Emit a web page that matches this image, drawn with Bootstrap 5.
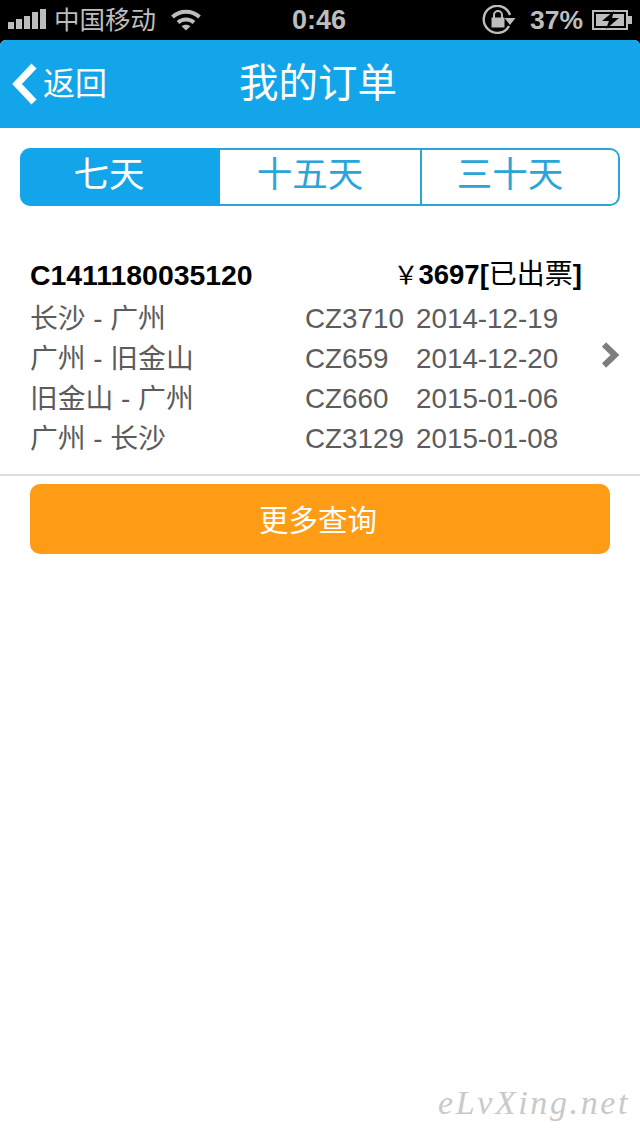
<!DOCTYPE html>
<html lang="zh-CN">
<head>
  <meta charset="UTF-8" />
  <title>我的订单</title>
  <link href="https://cdn.jsdelivr.net/npm/bootstrap@5.3.0/dist/css/bootstrap.min.css" rel="stylesheet" />
  <style>
    body {
      width: 640px;
      height: 1136px;
      overflow: hidden;
      font-family: "Liberation Sans", "Noto Sans CJK SC", sans-serif;
      background: #000;
    }
    .status-bar { height: 40px; color: #bdbdbd; font-size: 25.5px; line-height: 40px; }
    .status-left { width: 280px; padding-left: 8px; }
    .carrier { margin-left: 6px; }
    .wifi-icon { margin-left: 14px; }
    .status-time { width: 200px; padding-left: 12px; font-weight: 700; font-size: 27px; }
    .status-pct { margin-left: 14px; font-weight: 700; font-size: 26.5px; }
    .battery-icon { margin-left: 9px; }
    .screen { height: 1096px; background: #fff; border-radius: 6px 6px 0 0; overflow: hidden; }
    .top-bar { height: 88px; background: #12a5ea; color: #fff; display: grid; grid-template-columns: 1fr auto 1fr; padding: 0 4px 0 12px; }
    .top-title { font-size: 39.5px; line-height: 1; padding-right: 12px; }
    .back-text { font-size: 32px; margin-left: 6px; }
    .tab-group { margin: 20px 20px 0; height: 58px; }
    .tab-item {
      border: 2px solid #2aa5d8;
      border-left-width: 0;
      border-radius: 0;
      background: #fff;
      color: #2aa5d8;
      font-size: 35.5px;
      line-height: 1;
      padding: 0 20px 3px 0;
    }
    .tab-item:first-child { width: 200px; flex: none; background: #12a5ea; border-color: #12a5ea; color: #fff; border-radius: 10px 0 0 10px; }
    .tab-item:nth-child(2) { width: 202px; flex: none; }
    .tab-item:last-child { flex: 1; border-radius: 0 10px 10px 0; }
    .order-row { height: 270px; padding: 49px 20px 0 30px; border-bottom: 2px solid #dcdcdc; }
    .order-main { width: 552px; }
    .order-head { font-size: 28.4px; font-weight: 700; color: #000; line-height: 40px; height: 44px; }
    .order-status { font-size: 27.5px; }
    .yen { font-weight: 400; font-size: 25px; }
    .ticket-state { font-weight: 400; font-size: 28px; }
    .ticket-state b { font-size: 27.5px; }
    .flight-list { display: grid; grid-template-columns: 275px 111px 1fr; font-size: 27.8px; line-height: 40px; color: #5c5c5c; }
    .go-arrow { margin-top: 87px; margin-bottom: auto; }
    .more-btn { display: block; width: 580px; height: 70px; margin: 8px 30px 0; background: #ff9c16; border: 0; border-radius: 10px; color: #fff; font-size: 29.5px; padding: 5px 4px 0 0; }
    .more-btn:hover { background: #ff9c16; color: #fff; }
    .water-mark { position: absolute; right: 10px; bottom: 12px; font-family: "Liberation Serif", serif; font-style: italic; font-size: 34px; letter-spacing: 2.6px; color: #c9c9c9; line-height: 1.2; }
  </style>
</head>
<body class="position-relative">
  <div class="status-bar d-flex">
    <div class="status-left d-flex align-items-center">
      <svg width="40" height="22" viewBox="0 0 40 22" fill="#bdbdbd">
        <rect x="0" y="13" width="6" height="7" />
        <rect x="8" y="10" width="6" height="10" />
        <rect x="16" y="7" width="6" height="13" />
        <rect x="24" y="3" width="6" height="17" />
        <rect x="32" y="0" width="6" height="20" />
      </svg>
      <span class="carrier">中国移动</span>
      <svg class="wifi-icon" width="32" height="22" viewBox="0 0 30 22" fill="none" stroke="#bdbdbd" stroke-width="4">
        <path d="M1.5 8 C9 1 21 1 28.5 8" />
        <path d="M7 13.5 C11.5 9.5 18.5 9.5 23 13.5" />
        <path d="M15 21.5 L10.6 17.2 C13 15.2 17 15.2 19.4 17.2 Z" fill="#bdbdbd" stroke="none" />
      </svg>
    </div>
    <div class="status-time">0:46</div>
    <div class="flex-grow-1 d-flex align-items-center justify-content-end pe-2">
      <svg width="34" height="30" viewBox="0 0 34 30" fill="none" stroke="#bdbdbd" stroke-width="2.4">
        <path d="M27 21 A13.5 13.5 0 1 1 28 10" />
        <path d="M22.5 13 H33.5 L28 20 Z" fill="#bdbdbd" stroke="none" />
        <rect x="9.5" y="12.5" width="13" height="10" fill="#bdbdbd" stroke="none" />
        <path d="M12 13 V10 a4 4 0 0 1 8 0 V13" stroke-width="2" />
      </svg>
      <span class="status-pct">37%</span>
      <svg class="battery-icon" width="40" height="20" viewBox="0 0 40 20">
        <rect x="1" y="1" width="34" height="18" fill="none" stroke="#bdbdbd" stroke-width="2" />
        <rect x="4" y="4" width="28" height="12" fill="#bdbdbd" />
        <rect x="36" y="6" width="4" height="8" fill="#bdbdbd" />
        <path d="M22 1 L10 11 H17 L14 19 L27 8 H20 Z" fill="#000" />
      </svg>
    </div>
  </div>

  <div class="screen">
    <div class="top-bar align-items-center">
      <div class="d-flex align-items-center">
        <svg width="25" height="42" viewBox="0 0 25 42" fill="none" stroke="#fff" stroke-width="7">
          <path d="M22 3 L5 21 L22 39" />
        </svg>
        <span class="back-text">返回</span>
      </div>
      <div class="top-title">我的订单</div>
      <div></div>
    </div>

    <div class="d-flex tab-group" role="group">
      <button type="button" class="btn tab-item">七天</button>
      <button type="button" class="btn tab-item">十五天</button>
      <button type="button" class="btn tab-item">三十天</button>
    </div>

    <div class="order-row d-flex align-items-start justify-content-between">
      <div class="order-main">
        <div class="order-head d-flex justify-content-between">
          <span>C1411180035120</span>
          <span class="order-status"><span class="yen">￥</span>3697<span class="ticket-state"><b>[</b>已出票<b>]</b></span></span>
        </div>
        <div class="flight-list">
          <span>长沙 - 广州</span><span>CZ3710</span><span>2014-12-19</span>
          <span>广州 - 旧金山</span><span>CZ659</span><span>2014-12-20</span>
          <span>旧金山 - 广州</span><span>CZ660</span><span>2015-01-06</span>
          <span>广州 - 长沙</span><span>CZ3129</span><span>2015-01-08</span>
        </div>
      </div>
      <svg class="go-arrow" width="19" height="26" viewBox="0 0 19 26" fill="none" stroke="#7d7d7d" stroke-width="6">
        <path d="M3 2.5 L14 13 L3 23.5" />
      </svg>
    </div>

    <button type="button" class="btn more-btn">更多查询</button>
  </div>

  <div class="water-mark">eLvXing.net</div>
</body>
</html>
